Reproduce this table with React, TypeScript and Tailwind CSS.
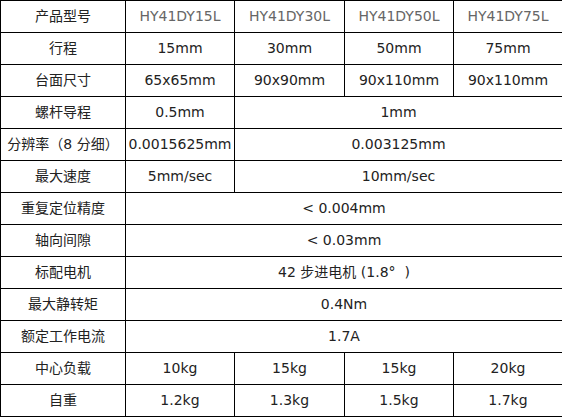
import React from "react";

type Cell = { t: string; span?: number };
const rows: Cell[][] = [
  [{ t: "产品型号" }, { t: "HY41DY15L" }, { t: "HY41DY30L" }, { t: "HY41DY50L" }, { t: "HY41DY75L" }],
  [{ t: "行程" }, { t: "15mm" }, { t: "30mm" }, { t: "50mm" }, { t: "75mm" }],
  [{ t: "台面尺寸" }, { t: "65x65mm" }, { t: "90x90mm" }, { t: "90x110mm" }, { t: "90x110mm" }],
  [{ t: "螺杆导程" }, { t: "0.5mm" }, { t: "1mm", span: 3 }],
  [{ t: "分辨率（8 分细）" }, { t: "0.0015625mm" }, { t: "0.003125mm", span: 3 }],
  [{ t: "最大速度" }, { t: "5mm/sec" }, { t: "10mm/sec", span: 3 }],
  [{ t: "重复定位精度" }, { t: "< 0.004mm", span: 4 }],
  [{ t: "轴向间隙" }, { t: "< 0.03mm", span: 4 }],
  [{ t: "标配电机" }, { t: "42 步进电机 (1.8°  )", span: 4 }],
  [{ t: "最大静转矩" }, { t: "0.4Nm", span: 4 }],
  [{ t: "额定工作电流" }, { t: "1.7A", span: 4 }],
  [{ t: "中心负载" }, { t: "10kg" }, { t: "15kg" }, { t: "15kg" }, { t: "20kg" }],
  [{ t: "自重" }, { t: "1.2kg" }, { t: "1.3kg" }, { t: "1.5kg" }, { t: "1.7kg" }],
];

export default function App() {
  return (
    <div className="w-[562px] h-[417px] bg-white">
      <table
        className="table-fixed border-collapse w-[562px] text-[14px] text-[#222]"
        style={{ fontFamily: '"DejaVu Sans", "Noto Sans CJK SC", sans-serif' }}
      >
        <colgroup>
          <col className="w-[125px]" />
          <col className="w-[109px]" />
          <col className="w-[110px]" />
          <col className="w-[109px]" />
          <col className="w-[109px]" />
        </colgroup>
        <tbody>
          {rows.map((r, i) => (
            <tr key={i} className="h-[32px]">
              {r.map((c, j) => (
                <td
                  key={j}
                  colSpan={c.span}
                  className={`border border-black text-center p-0 whitespace-pre ${
                    i === 0 && j > 0 ? "text-[#666]" : ""
                  }`}
                >
                  {c.t}
                </td>
              ))}
            </tr>
          ))}
        </tbody>
      </table>
    </div>
  );
}
